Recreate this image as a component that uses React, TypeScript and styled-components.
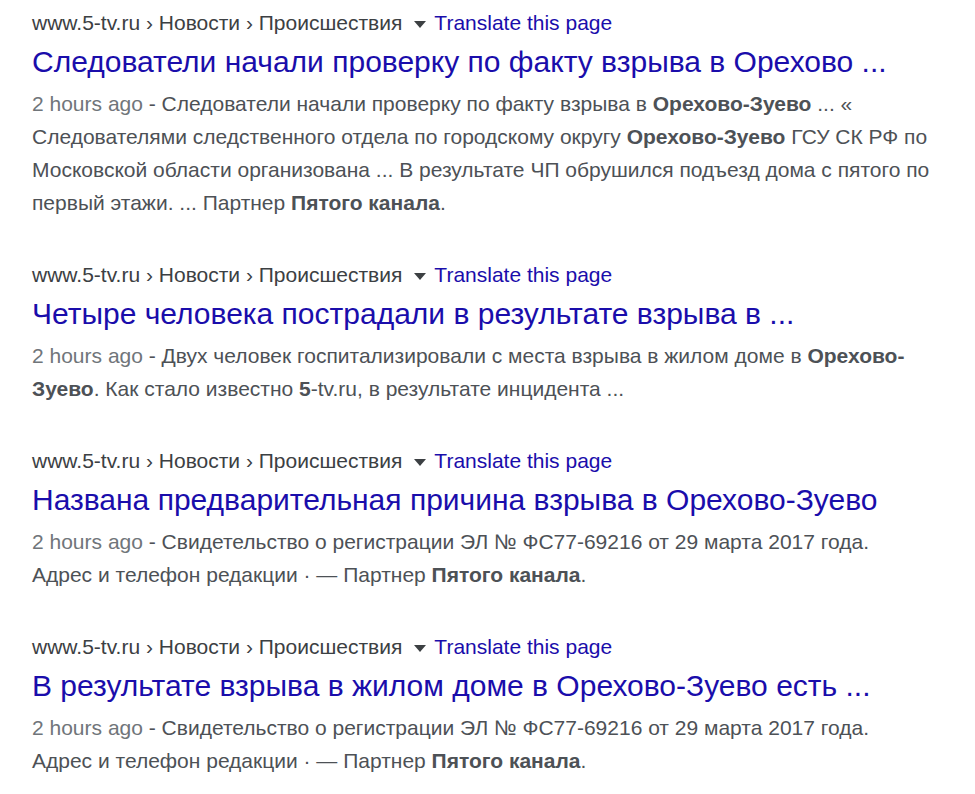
import React from "react";
import styled, { createGlobalStyle } from "styled-components";

const Global = createGlobalStyle`
  html, body { margin: 0; padding: 0; background: #fff; }
  body { font-family: "Liberation Sans", Arial, sans-serif; }
`;

const Page = styled.div`
  padding: 9px 0 0 32px;
  display: flex;
  flex-direction: column;
  gap: 42px;
`;

const Result = styled.div`
  display: flex;
  flex-direction: column;
`;

const UrlRow = styled.div`
  display: flex;
  align-items: center;
  height: 28px;
  font-size: 21px;
  color: #3c4043;
  white-space: nowrap;
`;

const Arrow = styled.span`
  display: inline-block;
  width: 0;
  height: 0;
  border-left: 6px solid transparent;
  border-right: 6px solid transparent;
  border-top: 7px solid #3c4043;
  margin: 2px 8px 0 12px;
`;

const Translate = styled.span`
  color: #1a0dab;
`;

const Title = styled.div`
  font-size: 30px;
  line-height: 38px;
  margin-top: 6px;
  color: #1a0dab;
  white-space: nowrap;
`;

const Snippet = styled.div`
  font-size: 21px;
  line-height: 33px;
  margin-top: 6px;
  color: #4d5156;
  max-width: 905px;
`;

const Date = styled.span`
  color: #70757a;
`;

const B = styled.b`
  font-weight: bold;
  color: #4d5156;
`;

type R = { title: string; snippet: React.ReactNode };

const results: R[] = [
  {
    title: "Следователи начали проверку по факту взрыва в Орехово ...",
    snippet: (
      <>
        Следователи начали проверку по факту взрыва в <B>Орехово-Зуево</B> ... «
        Следователями следственного отдела по городскому округу <B>Орехово-Зуево</B> ГСУ СК РФ по
        Московской области организована ... В результате ЧП обрушился подъезд дома с пятого по
        первый этажи. ... Партнер <B>Пятого канала</B>.
      </>
    ),
  },
  {
    title: "Четыре человека пострадали в результате взрыва в ...",
    snippet: (
      <>
        Двух человек госпитализировали с места взрыва в жилом доме в <B>Орехово-Зуево</B>. Как
        стало известно <B>5</B>-tv.ru, в результате инцидента ...
      </>
    ),
  },
  {
    title: "Названа предварительная причина взрыва в Орехово-Зуево",
    snippet: (
      <>
        Свидетельство о регистрации ЭЛ № ФС77-69216 от 29 марта 2017 года.
        <br />
        Адрес и телефон редакции · — Партнер <B>Пятого канала</B>.
      </>
    ),
  },
  {
    title: "В результате взрыва в жилом доме в Орехово-Зуево есть ...",
    snippet: (
      <>
        Свидетельство о регистрации ЭЛ № ФС77-69216 от 29 марта 2017 года.
        <br />
        Адрес и телефон редакции · — Партнер <B>Пятого канала</B>.
      </>
    ),
  },
];

export default function App() {
  return (
    <>
      <Global />
      <Page>
        {results.map((r, i) => (
          <Result key={i}>
            <UrlRow>
              www.5-tv.ru › Новости › Происшествия
              <Arrow />
              <Translate>Translate this page</Translate>
            </UrlRow>
            <Title>{r.title}</Title>
            <Snippet>
              <Date>2 hours ago</Date> - {r.snippet}
            </Snippet>
          </Result>
        ))}
      </Page>
    </>
  );
}
